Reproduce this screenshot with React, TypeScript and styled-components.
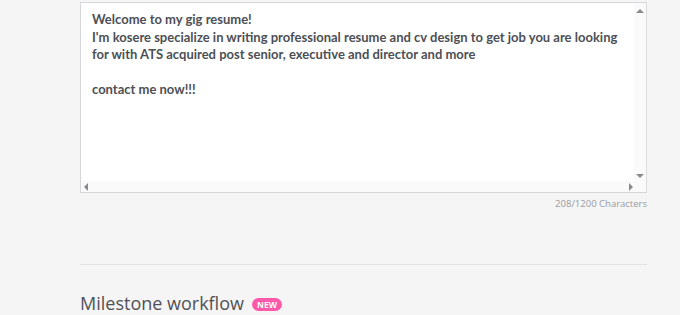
import React from "react";
import styled, { createGlobalStyle } from "styled-components";

const GlobalStyle = createGlobalStyle`
  html, body {
    margin: 0;
    padding: 0;
    background: #f5f5f5;
  }
  body {
    font-family: "Open Sans", "Liberation Sans", sans-serif;
  }
`;

const Page = styled.div`
  width: 567px;
  padding: 2px 0 0 80px;
`;

const Editor = styled.div`
  display: grid;
  grid-template-columns: 1fr 12px;
  grid-template-rows: 178px 11px;
  border: 1px solid #d5d6d9;
  border-right-color: #dcdcdc;
  background: #fff;
`;

const TextArea = styled.div`
  padding: 8px 0 0 11px;
  font-family: "Lato", "Liberation Sans", sans-serif;
  font-size: 13px;
  font-weight: 700;
  line-height: 17.5px;
  color: #4d4f55;
  white-space: pre-wrap;
  overflow: hidden;
`;

const ScrollTrack = styled.div<{ $dir: "v" | "h" }>`
  background: #fafafa;
  display: flex;
  flex-direction: ${(p) => (p.$dir === "v" ? "column" : "row")};
  justify-content: space-between;
  align-items: center;
  padding: ${(p) => (p.$dir === "v" ? "6px 0 3px" : "0 1px 0 3px")};
  box-sizing: border-box;
`;

const Corner = styled.div`
  background: #fafafa;
`;

const Arrow = styled.span<{ $to: "up" | "down" | "left" | "right" }>`
  width: 0;
  height: 0;
  border: 4px solid transparent;
  ${(p) =>
    p.$to === "up"
      ? "border-bottom-color: #8a8a8a; border-top-width: 0;"
      : p.$to === "down"
      ? "border-top-color: #8a8a8a; border-bottom-width: 0;"
      : p.$to === "left"
      ? "border-right-color: #8a8a8a; border-left-width: 0;"
      : "border-left-color: #8a8a8a; border-right-width: 0;"}
`;

const Counter = styled.div`
  text-align: right;
  margin-top: 4px;
  font-family: "Open Sans", "Liberation Sans", sans-serif;
  font-size: 9.5px;
  color: #9a9ba0;
`;

const Divider = styled.hr`
  border: 0;
  border-top: 1px solid #e2e3e5;
  margin: 54px 0 0;
`;

const SectionTitle = styled.h2`
  display: flex;
  align-items: center;
  gap: 8px;
  margin: 26px 0 0;
  font-family: "Open Sans", "Liberation Sans", sans-serif;
  font-size: 18px;
  font-weight: 400;
  color: #505157;
`;

const Badge = styled.span`
  background: #ff5aa9;
  color: #fff;
  font-size: 8.5px;
  font-weight: 700;
  line-height: 13px;
  padding: 0 5px;
  border-radius: 7px;
  margin-top: 3px;
`;

const text = `Welcome to my gig resume!
I'm kosere specialize in writing professional resume and cv design to get job you are looking for with ATS acquired post senior, executive and director and more

contact me now!!!`;

export default function App() {
  return (
    <>
      <GlobalStyle />
      <Page>
        <Editor>
          <TextArea>{text}</TextArea>
          <ScrollTrack $dir="v">
            <Arrow $to="up" />
            <Arrow $to="down" />
          </ScrollTrack>
          <ScrollTrack $dir="h">
            <Arrow $to="left" />
            <Arrow $to="right" />
          </ScrollTrack>
          <Corner />
        </Editor>
        <Counter>208/1200 Characters</Counter>
        <Divider />
        <SectionTitle>
          Milestone workflow <Badge>NEW</Badge>
        </SectionTitle>
      </Page>
    </>
  );
}
